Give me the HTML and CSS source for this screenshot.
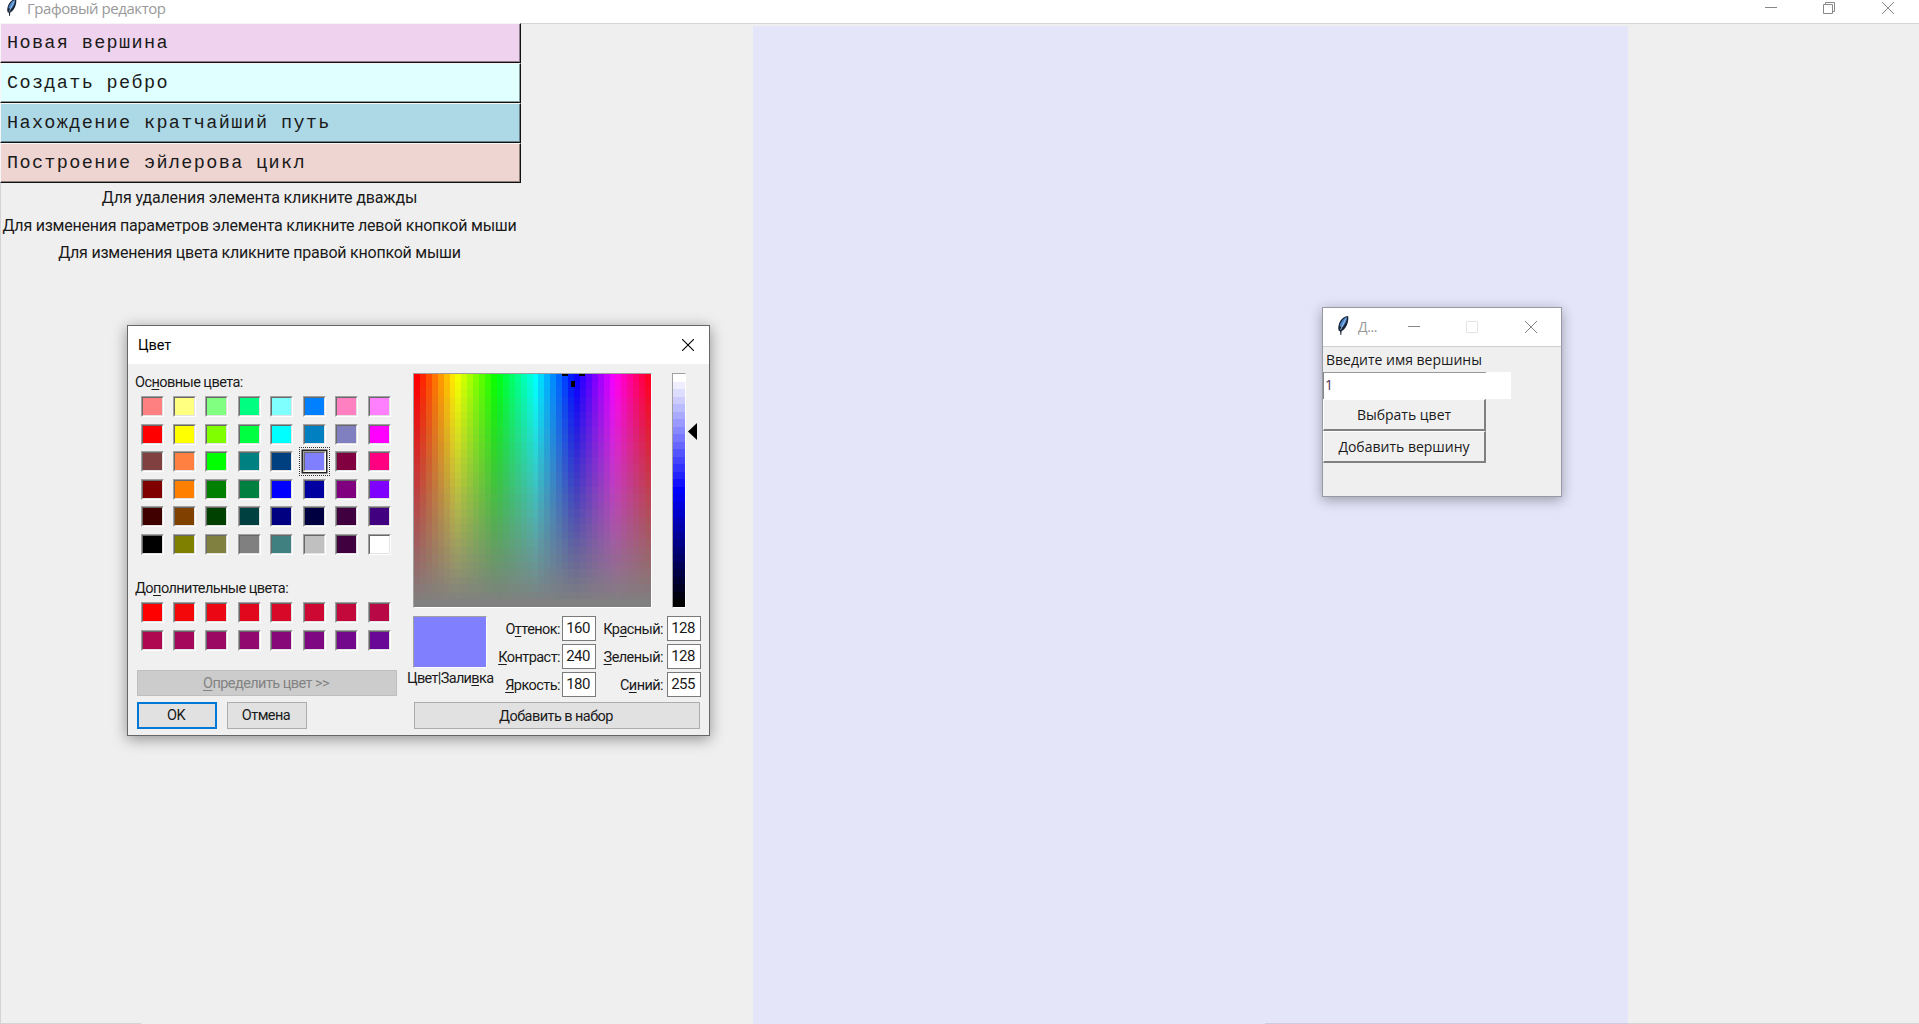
FILE: index.html
```html
<!DOCTYPE html>
<html lang="ru">
<head>
<meta charset="utf-8">
<title>Графовый редактор</title>
<link rel="stylesheet" href="styles.css">
</head>
<body>
<svg width="0" height="0" class="defs" aria-hidden="true">
  <symbol id="feather" viewBox="0 0 12 20">
    <path d="M11 0C7 0 3 4 2 8c-1 3-1 5 0 7l1 0 .5 4 .8 0 .3-4c3-1 5-5 6-8 .8-3 1-5 .4-7z" fill="#172334"/>
    <path d="M10 1C6.500 2 3.400 6 2.600 10L5 11.500C8 9 10 5 10 1z" fill="#4c86c8"/>
    <path d="M8.800 2.500L3.500 14" stroke="#a9cbec" stroke-width=".8"/>
  </symbol>
</svg>

<div class="app">
  <header class="titlebar">
    <svg class="logo" width="11" height="18"><use href="#feather"/></svg>
    <span class="apptitle">Графовый редактор</span>
    <svg class="winbtns" width="135" height="16" fill="none" stroke="#888">
      <path d="M0 7.500h12"/>
      <path d="M58.500 4.500h9v9h-9zM60.500 4.500v-2h9v9h-2"/>
      <path d="M117 2l12 12M129 2l-12 12"/>
    </svg>
  </header>
  <main class="workspace">
    <aside class="sidebar">
      <button class="tool pink">Новая вершина</button>
      <button class="tool cyan">Создать ребро</button>
      <button class="tool blue">Нахождение кратчайший путь</button>
      <button class="tool rose">Построение эйлерова цикл</button>
      <p class="hint first">Для удаления элемента кликните дважды</p>
      <p class="hint">Для изменения параметров элемента кликните левой кнопкой мыши</p>
      <p class="hint">Для изменения цвета кликните правой кнопкой мыши</p>
    </aside>
    <section class="board"></section>
  </main>
</div>

<div class="dialog">
  <div class="dlg-title"><span>Цвет</span>
    <svg width="12" height="12" stroke="#000" stroke-width="1.1"><path d="M0 0l12 12M12 0L0 12"/></svg>
  </div>
  <div class="dlg-body">
    <div class="left">
      <div class="label">Ос<u>н</u>овные цвета:</div>
      <div class="swatches" id="basic"></div>
      <div class="label custom-label">До<u>п</u>олнительные цвета:</div>
      <div class="swatches" id="custom"></div>
      <button class="btn define" disabled><span><u>О</u>пределить цвет &gt;&gt;</span></button>
      <div class="actions"><button class="btn ok">OK</button><button class="btn">Отмена</button></div>
    </div>
    <div class="right">
      <div class="pickers">
        <div class="sunken spectrum"><canvas id="spectrum" width="40" height="31"></canvas>
          <i class="mark m1"></i><i class="mark m2"></i><i class="mark m3"></i></div>
        <div class="sunken lum"><canvas id="lum" width="1" height="31"></canvas></div>
        <svg class="arrow" width="9" height="17"><path d="M9 0v17L0 8.500z"/></svg>
      </div>
      <div class="values">
        <div class="preview-col"><div class="sunken preview"></div><div class="plabel"><span>Цвет|Зали<u>в</u>ка</span></div></div>
        <div class="fields hsl">
          <label>О<u>т</u>тенок:</label><span class="field">160</span>
          <label><u>К</u>онтраст:</label><span class="field">240</span>
          <label><u>Я</u>ркость:</label><span class="field">180</span>
        </div>
        <div class="fields rgb">
          <label>Кр<u>а</u>сный:</label><span class="field">128</span>
          <label><u>З</u>еленый:</label><span class="field">128</span>
          <label>С<u>и</u>ний:</label><span class="field">255</span>
        </div>
      </div>
      <button class="btn add"><span><u>Д</u>обавить в набор</span></button>
    </div>
  </div>
</div>

<div class="child">
  <div class="child-title">
    <svg width="12" height="20"><use href="#feather"/></svg>
    <span>Д...</span>
    <svg class="child-btns" width="130" height="13" fill="none" stroke="#888">
      <path d="M0 6.500h12"/><path d="M58.500 1.500h11v11h-11z" stroke="#e4e4e4"/><path d="M117 1l12 12M129 1l-12 12"/>
    </svg>
  </div>
  <div class="child-body">
    <div class="child-label">Введите имя вершины</div>
    <div class="entry">1</div>
    <button class="tk">Выбрать цвет</button>
    <button class="tk">Добавить вершину</button>
  </div>
</div>
<script src="app.js"></script>
</body>
</html>
```
FILE: styles.css
```css
* { box-sizing: border-box; }
body { margin: 0; background: #efefef; font-family: Roboto, "Liberation Sans", sans-serif; color: #1a1a1a; overflow: hidden; }
.defs { position: absolute; }
button { font: inherit; letter-spacing: inherit; color: inherit; margin: 0; padding: 0; border-radius: 0; }
p { margin: 0; }
span, label { white-space: nowrap; }
u { text-decoration-thickness: 1px; text-underline-offset: 2px; }

/* main window */
.app { height: 1024px; display: flex; flex-direction: column; }
.titlebar { height: 24px; flex: none; background: #fff; border-bottom: 1px solid #d4d4d4; display: flex; align-items: flex-start; padding-left: 6px; }
.logo { margin-top: -1px; }
.apptitle { margin-left: 10px; font: 15px/16px "Open Sans", sans-serif; color: #999; letter-spacing: -.45px; }
.winbtns { margin-left: auto; margin-right: 19px; }
.workspace { flex: 1; display: flex; border-left: 1px solid #d4d4d4; background: linear-gradient(#d4d4d4, #d4d4d4) left bottom / 140px 1px no-repeat, linear-gradient(#d4d4d4, #d4d4d4) right bottom / 654px 1px no-repeat; }
.sidebar { width: 752px; flex: none; }
.board { width: 875px; margin-top: 2px; background: linear-gradient(#cfcbdc, #cfcbdc) right bottom / 363px 1px no-repeat, #e4e5f9; }
.tool { display: block; width: 521px; height: 40px; margin-left: -1px; text-align: left; padding: 2px 0 0 6px; border: solid; border-width: 1px 1px 1px 1px; border-color: #f6f6f6 #111 #111 #f6f6f6; box-shadow: inset -1px -1px #0006; font: 18.500px/36px "Liberation Mono", monospace; letter-spacing: 1.35px; }
.tool:first-child { margin-top: -1px; }
.pink { background: #eed2ee; }
.cyan { background: #e0ffff; }
.blue { background: #add8e6; }
.rose { background: #eed5d2; }
.hint { width: 519px; margin-left: -1px; text-align: center; font-size: 16px; line-height: 27.500px; letter-spacing: -.23px; white-space: nowrap; position: relative; top: 1px; }
.hint.first { letter-spacing: -.13px; }

/* colour dialog */
.dialog { position: absolute; left: 127px; top: 325px; width: 583px; height: 411px; background: #f0f0f0; border: 1px solid #666; box-shadow: 0 3px 14px #0006; font-size: 14.500px; letter-spacing: -.56px; }
.dlg-title { height: 38px; background: #fff; display: flex; align-items: center; justify-content: space-between; padding: 0 15px 0 10px; color: #000; letter-spacing: -.1px; }
.dlg-body { display: flex; }
.left { width: 279px; flex: none; padding: 9px 0 0 9px; }
.label { height: 20px; line-height: 20px; margin-left: -2px; }
.swatches { display: grid; grid-template-columns: repeat(8, 32.450px); grid-auto-rows: 27.500px; padding: 3px 0 0 3.500px; }
.swatch { width: 23px; height: 21px; border: 1px solid; border-color: #a0a0a0 #fff #fff #a0a0a0; display: flex; }
.swatch i { flex: 1; border: 1px solid; border-color: #696969 #e3e3e3 #e3e3e3 #696969; }
.swatch.sel { box-shadow: 0 0 0 1.500px #222, 0 0 0 4px #f0f0f0; outline: 1px dotted #333; outline-offset: 3px; }
.custom-label { margin-top: 18px; }
.btn { border: 1px solid #adadad; background: #e1e1e1; height: 27px; display: flex; align-items: center; justify-content: center; padding-right: 2px; }
.define { width: 260px; height: 26px; background: #ccc; border-color: #bfbfbf; color: #838383; margin-top: 13px; }
.actions { display: flex; gap: 10px; margin-top: 6px; }
.actions .btn { width: 80px; }
.actions .ok { border: 2px solid #0078d7; }
.right { flex: 1; padding: 9px 0 0 6px; }
.sunken { border: 1px solid; border-color: #a0a0a0 #fff #fff #a0a0a0; }
.sunken canvas { display: block; width: 100%; height: 100%; image-rendering: pixelated; }
.pickers { display: flex; height: 235px; }
.spectrum { position: relative; width: 239px; }
.lum { width: 14px; margin-left: 20px; }
.arrow { margin: 50px 0 0 2px; }
.mark { position: absolute; background: #000; }
.m1 { left: 148px; top: 0; width: 6px; height: 2px; }
.m2 { left: 165px; top: 0; width: 6px; height: 2px; }
.m3 { left: 157px; top: 7px; width: 4px; height: 6px; }
.values { display: flex; height: 94px; padding-top: 8px; }
.preview-col { width: 75px; }
.preview { width: 74px; height: 52px; background: #8080ff; }
.plabel { margin-left: -6px; line-height: 22px; letter-spacing: -.66px; }
.fields { display: grid; grid-template-columns: 1fr 34px; column-gap: 2px; grid-auto-rows: 28px; text-align: right; }
.fields label { line-height: 27px; }
.hsl { width: 108px; }
.rgb { width: 105px; column-gap: 4px; }
.field { height: 25px; border: 1px solid #7a7a7a; background: #fff; line-height: 23px; text-align: center; font-size: 15px; letter-spacing: -.6px; padding-right: 2px; }
.add { width: 286px; margin-left: 1px; padding-top: 1px; }

/* vertex window */
.child { position: absolute; left: 1322px; top: 307px; width: 240px; height: 190px; background: #efefef; border: 1px solid #9999a3; box-shadow: 0 3px 12px #0005; font: 14px "Open Sans", sans-serif; }
.child-title { height: 39px; background: #fff; border-bottom: 1px solid #d0d0d0; display: flex; align-items: center; padding: 0 23px 2px 14px; color: #999; }
.child-title span { margin-left: 9px; letter-spacing: -.4px; }
.child-btns { margin-left: auto; }
.child-label { height: 25px; line-height: 26px; padding-left: 3px; }
.entry { width: 188px; height: 27px; background: linear-gradient(#999, #999) 0 0 / 162px 1px no-repeat, #fff; border-left: 1px solid #888; padding-left: 1px; line-height: 26px; color: #503050; }
.tk { width: 163px; height: 32px; display: block; background: #f0f0f0; border: solid; border-width: 1px 2px 2px 1px; border-color: #fff #808080 #808080 #fff; }
```
FILE: app.js
```js
const basic = [
  'ff8080 ffff80 80ff80 00ff80 80ffff 0080ff ff80c0 ff80ff',
  'ff0000 ffff00 80ff00 00ff40 00ffff 0080c0 8080c0 ff00ff',
  '804040 ff8040 00ff00 008080 004080 8080ff 800040 ff0080',
  '800000 ff8000 008000 008040 0000ff 0000a0 800080 8000ff',
  '400000 804000 004000 004040 000080 000040 400040 400080',
  '000000 808000 808040 808080 408080 c0c0c0 400040 ffffff'
].join(' ').split(' ');
const custom = Array.from({length: 16}, (_, i) =>
  [255 - i * 10, i ? 8 : 0, i * 10].map(v => v.toString(16).padStart(2, '0')).join(''));

function fill(id, colors) {
  document.getElementById(id).innerHTML = colors.map(c =>
    `<div class="swatch${c === '8080ff' ? ' sel' : ''}"><i style="background:#${c}"></i></div>`).join('');
}
fill('basic', basic);
fill('custom', custom);

const hue = document.getElementById('spectrum').getContext('2d');
const lum = document.getElementById('lum').getContext('2d');
for (let y = 0; y < 31; y++) {
  for (let x = 0; x < 40; x++) {
    hue.fillStyle = `hsl(${x * 9}, ${100 - y / 0.3}%, 50%)`;
    hue.fillRect(x, y, 1, 1);
  }
  lum.fillStyle = `hsl(240, 100%, ${100 - y / 0.3}%)`;
  lum.fillRect(0, y, 1, 1);
}
```
